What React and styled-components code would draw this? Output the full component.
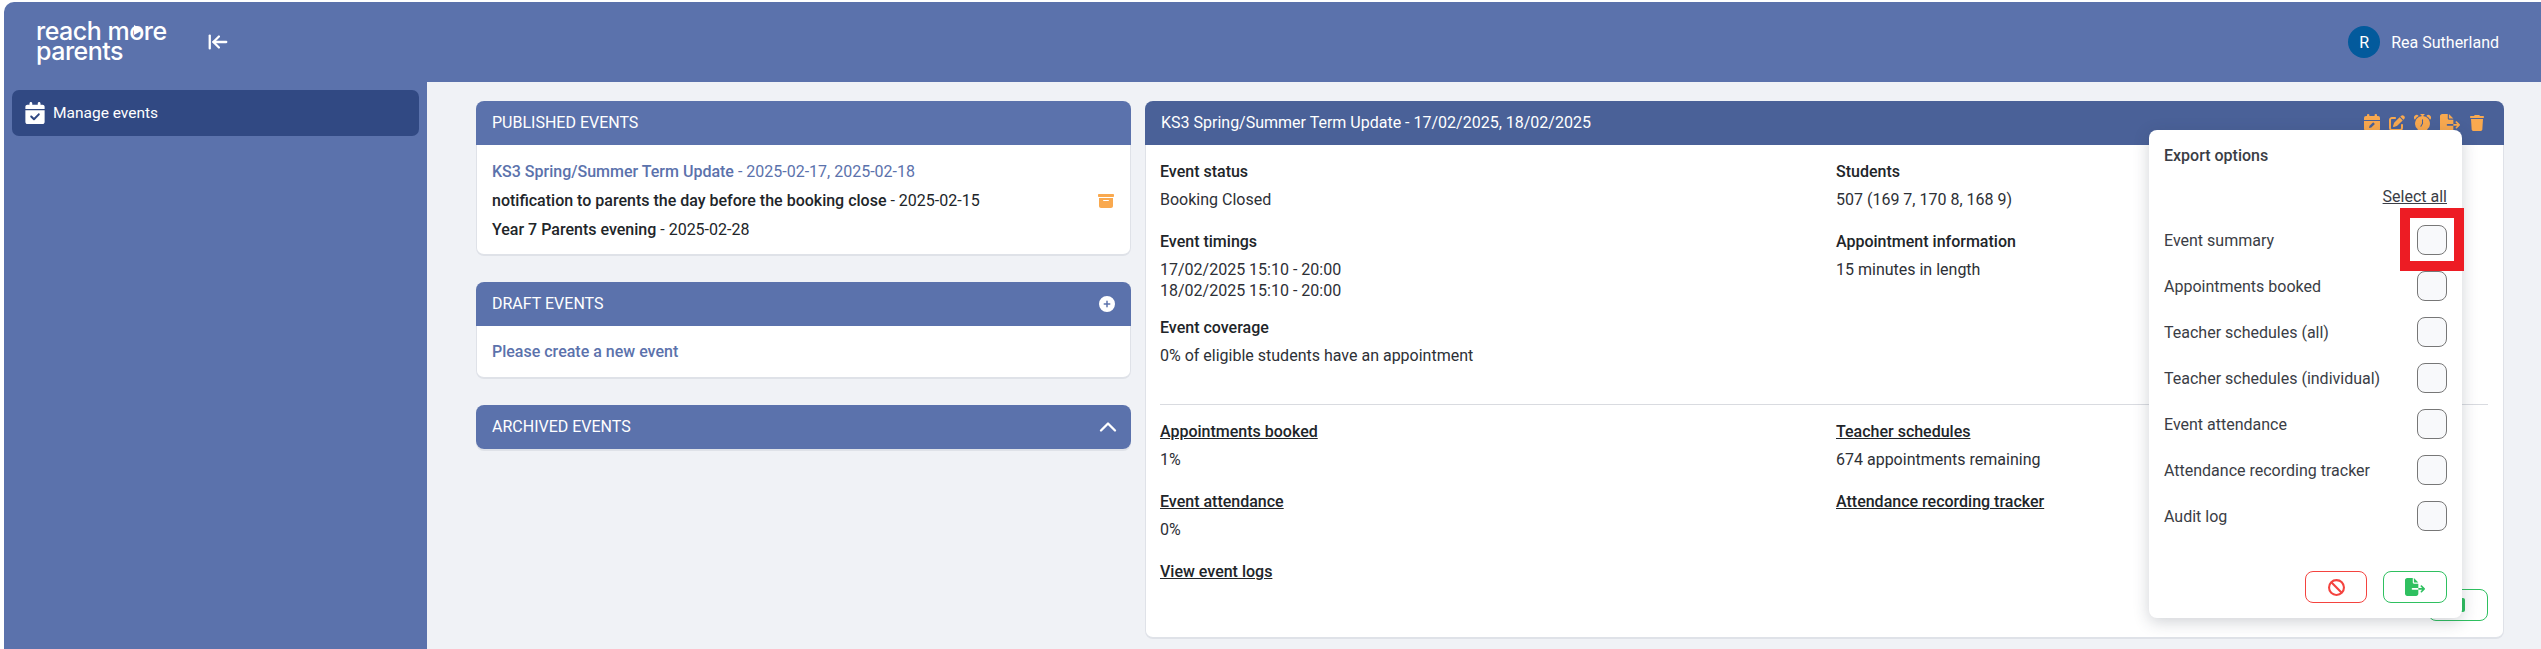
import React from 'react';
import styled, { createGlobalStyle } from 'styled-components';
import { ArrowLeftToLine, ChevronUp } from 'lucide-react';
import { FaCalendarCheck, FaCirclePlus, FaBoxArchive, FaFileExport, FaTrash, FaBan, FaPenToSquare, FaSquare } from 'react-icons/fa6';
import { BsAlarmFill } from 'react-icons/bs';

const GlobalStyle = createGlobalStyle`
  * { box-sizing: border-box; }
  body { margin: 0; background: #fff; font-family: Roboto, "Liberation Sans", sans-serif; color: #212529; overflow: hidden; }
  a { color: inherit; }
`;

const Page = styled.div`
  height: 649px;
  padding: 2px 0 0 4px;
  overflow: hidden;
  background: #fff;
`;

const Shell = styled.div`
  height: 100%;
  display: flex;
  flex-direction: column;
  background: #5b72ac;
  border-top-left-radius: 10px;
  overflow: hidden;
`;

const TopBar = styled.header`
  height: 80px;
  flex: none;
  display: flex;
  align-items: center;
  padding-left: 32px;
  color: #fff;
`;

const Logo = styled.div`
  width: 171px;
  margin-top: -2px;
  font-family: Inter, Lato, sans-serif;
  font-size: 25px;
  font-weight: 500;
  line-height: 20px;
  letter-spacing: -0.5px;
  color: #fff;
`;

const LogoO = styled.span`
  position: relative;
  &::after {
    content: '';
    position: absolute;
    left: 5px;
    top: 9px;
    border-left: 9px solid #fff;
    border-top: 5.5px solid transparent;
    border-bottom: 5.5px solid transparent;
  }
`;

const Toggle = styled.span`
  display: flex;
  color: #fff;
`;

const User = styled.div`
  margin-left: auto;
  margin-right: 42px;
  display: flex;
  align-items: center;
  gap: 11px;
  font-size: 16px;
`;

const Avatar = styled.span`
  width: 32px;
  height: 32px;
  border-radius: 50%;
  background: #035a9c;
  display: flex;
  align-items: center;
  justify-content: center;
  font-size: 16px;
`;

const Body = styled.div`
  flex: 1;
  min-height: 0;
  display: flex;
`;

const Sidebar = styled.nav`
  width: 423px;
  flex: none;
  padding: 8px;
`;

const NavItem = styled.div`
  height: 46px;
  border-radius: 7px;
  background: #314983;
  color: #fff;
  display: flex;
  align-items: center;
  gap: 7px;
  padding: 0 12px;
  font-size: 15.5px;
  svg { font-size: 22px; }
`;

const Main = styled.main`
  flex: 1;
  background: #f0f2f6;
  padding: 19px 37px 0 49px;
  display: grid;
  grid-template-columns: 655px 1fr;
  column-gap: 14px;
  align-items: start;
`;

const Stack = styled.div`
  display: flex;
  flex-direction: column;
  gap: 26px;
`;

const Card = styled.section`
  position: relative;
  background: #fff;
  border-radius: 8px;
  border: 1px solid #dfe2e8;
  border-width: 0 1px 2px 1px;
`;

const CardHead = styled.div`
  height: 44px;
  margin: 0 -1px;
  padding: 0 16px 1px;
  display: flex;
  align-items: center;
  justify-content: space-between;
  background: ${p => p.$dark ? '#4a6198' : '#5b72ac'};
  border-radius: ${p => p.$closed ? '8px' : '8px 8px 0 0'};
  color: #fff;
  font-size: 16px;
`;

const HeadIcons = styled.div`
  display: flex;
  gap: 9px;
  margin-right: 3px;
  align-items: center;
  color: #f9a94f;
  font-size: 16px;
`;

const Chevron = styled(ChevronUp)`
  margin-right: -7px;
`;

const ListBody = styled.div`
  padding: 12px 15px 10px;
`;

const EventRow = styled.div`
  height: 29px;
  display: flex;
  align-items: center;
  justify-content: space-between;
  font-size: 16px;
  color: ${p => p.$active ? '#5b72ac' : '#212529'};
  b { font-weight: 500; }
  svg { color: #f9a94f; font-size: 16px; margin-right: 1px; }
`;

const EmptyNote = styled.div`
  height: 51px;
  padding: 0 15px;
  display: flex;
  align-items: center;
  color: #5b72ac;
  font-size: 16px;
  font-weight: 500;
`;

const DetailBody = styled.div`
  padding: 16px 15px 16px 14px;
  height: 492px;
  display: flex;
  flex-direction: column;
`;

const Columns = styled.div`
  display: grid;
  grid-template-columns: 676px 1fr;
`;

const Block = styled.div`
  margin-bottom: ${p => p.$tight ? '16px' : '21px'};
`;

const Label = styled.div`
  font-size: 16px;
  font-weight: 500;
  line-height: 21px;
  margin-bottom: 7px;
  a { text-decoration: underline; }
`;

const Value = styled.div`
  font-size: 16px;
  line-height: 21px;
  color: #2d3036;
`;

const Divider = styled.hr`
  width: 100%;
  border: 0;
  border-top: 1px solid #d9dbe0;
  margin: 17px 0 16px;
`;

const ExportRow = styled.div`
  margin-top: auto;
  display: flex;
  justify-content: flex-end;
`;

const OutlineButton = styled.button`
  width: ${p => p.$w}px;
  height: 32px;
  border-radius: 8px;
  background: #fff;
  border: 1px solid ${p => p.$red ? '#f4433f' : '#2fc060'};
  color: ${p => p.$red ? '#f4433f' : '#2fc060'};
  display: flex;
  align-items: center;
  justify-content: center;
  padding: 0;
  font-size: 17px;
`;

const Popup = styled.div`
  position: absolute;
  top: 29px;
  right: 41px;
  width: 313px;
  height: 488px;
  padding: 16px 15px 15px;
  background: #fff;
  border-radius: 8px;
  box-shadow: 0 4px 16px rgba(40, 50, 70, 0.22);
  color: #3a3d45;
  display: flex;
  flex-direction: column;
`;

const PopupTitle = styled.div`
  font-size: 16px;
  font-weight: 500;
  line-height: 20px;
`;

const SelectAll = styled.a`
  align-self: flex-end;
  margin-top: 21px;
  height: 20px;
  font-size: 16px;
  line-height: 20px;
  text-decoration: underline;
`;

const OptionRow = styled.label`
  position: relative;
  height: 30px;
  margin-top: 16px;
  display: flex;
  align-items: center;
  justify-content: space-between;
  font-size: 16px;
  &:first-of-type { margin-top: 18px; }
`;

const Check = styled.span`
  width: 30px;
  height: 30px;
  border: 1px solid #777;
  border-radius: 8px;
  background: #f8f9fb;
`;

const Highlight = styled.span`
  position: absolute;
  right: -17px;
  top: -17px;
  width: 64px;
  height: 63px;
  border: 10px solid #ed1c24;
`;

const PopupActions = styled.div`
  margin-top: auto;
  display: flex;
  justify-content: flex-end;
  gap: 16px;
`;

const options = [
  'Event summary',
  'Appointments booked',
  'Teacher schedules (all)',
  'Teacher schedules (individual)',
  'Event attendance',
  'Attendance recording tracker',
  'Audit log',
];

// solid calendar with a small pen, no match in the icon packs
const CalendarPen = () => (
  <svg width="16" height="17" viewBox="0 0 16 17">
    <rect x="3" y="0" width="2.4" height="4" rx="1" fill="currentColor" />
    <rect x="10.6" y="0" width="2.4" height="4" rx="1" fill="currentColor" />
    <path d="M0 4a2 2 0 0 1 2-2h12a2 2 0 0 1 2 2v2H0z" fill="currentColor" />
    <path d="M0 7h16v8a2 2 0 0 1-2 2H2a2 2 0 0 1-2-2z" fill="currentColor" />
    <path d="M5 14l.6-2.2 3.6-3.6 1.7 1.7-3.6 3.6z" fill="#4a6198" />
  </svg>
);

export default function App() {
  return (
    <>
      <GlobalStyle />
      <Page>
        <Shell>
          <TopBar>
            <Logo>
              reach m<LogoO>o</LogoO>re<br />parents
            </Logo>
            <Toggle><ArrowLeftToLine size={22} strokeWidth={2.5} /></Toggle>
            <User>
              <Avatar>R</Avatar>
              Rea Sutherland
            </User>
          </TopBar>
          <Body>
            <Sidebar>
              <NavItem><FaCalendarCheck />Manage events</NavItem>
            </Sidebar>
            <Main>
              <Stack>
                <Card>
                  <CardHead>PUBLISHED EVENTS</CardHead>
                  <ListBody>
                    <EventRow $active><span><b>KS3 Spring/Summer Term Update</b> - 2025-02-17, 2025-02-18</span></EventRow>
                    <EventRow><span><b>notification to parents the day before the booking close</b> - 2025-02-15</span><FaBoxArchive /></EventRow>
                    <EventRow><span><b>Year 7 Parents evening</b> - 2025-02-28</span></EventRow>
                  </ListBody>
                </Card>
                <Card>
                  <CardHead>DRAFT EVENTS<FaCirclePlus /></CardHead>
                  <EmptyNote>Please create a new event</EmptyNote>
                </Card>
                <Card>
                  <CardHead $closed>ARCHIVED EVENTS<Chevron size={28} /></CardHead>
                </Card>
              </Stack>
              <Card>
                <CardHead $dark>
                  KS3 Spring/Summer Term Update - 17/02/2025, 18/02/2025
                  <HeadIcons>
                    <CalendarPen />
                    <FaPenToSquare />
                    <BsAlarmFill size={17} />
                    <FaFileExport size={20} />
                    <FaTrash />
                  </HeadIcons>
                </CardHead>
                <DetailBody>
                  <Columns>
                    <div>
                      <Block><Label>Event status</Label><Value>Booking Closed</Value></Block>
                      <Block $tight><Label>Event timings</Label><Value>17/02/2025 15:10 - 20:00<br />18/02/2025 15:10 - 20:00</Value></Block>
                      <Block><Label>Event coverage</Label><Value>0% of eligible students have an appointment</Value></Block>
                    </div>
                    <div>
                      <Block><Label>Students</Label><Value>507 (169 7, 170 8, 168 9)</Value></Block>
                      <Block><Label>Appointment information</Label><Value>15 minutes in length</Value></Block>
                    </div>
                  </Columns>
                  <Divider />
                  <Columns>
                    <div>
                      <Block><Label><a>Appointments booked</a></Label><Value>1%</Value></Block>
                      <Block><Label><a>Event attendance</a></Label><Value>0%</Value></Block>
                      <Label><a>View event logs</a></Label>
                    </div>
                    <div>
                      <Block><Label><a>Teacher schedules</a></Label><Value>674 appointments remaining</Value></Block>
                      <Block><Label><a>Attendance recording tracker</a></Label></Block>
                    </div>
                  </Columns>
                  <ExportRow>
                    <OutlineButton $w={60}><FaSquare size={16} /></OutlineButton>
                  </ExportRow>
                </DetailBody>
                <Popup>
                  <PopupTitle>Export options</PopupTitle>
                  <SelectAll>Select all</SelectAll>
                  {options.map((name, i) => (
                    <OptionRow key={name}>
                      {name}
                      <Check />
                      {i === 0 && <Highlight />}
                    </OptionRow>
                  ))}
                  <PopupActions>
                    <OutlineButton $red $w={62}><FaBan /></OutlineButton>
                    <OutlineButton $w={64}><FaFileExport size={20} /></OutlineButton>
                  </PopupActions>
                </Popup>
              </Card>
            </Main>
          </Body>
        </Shell>
      </Page>
    </>
  );
}
